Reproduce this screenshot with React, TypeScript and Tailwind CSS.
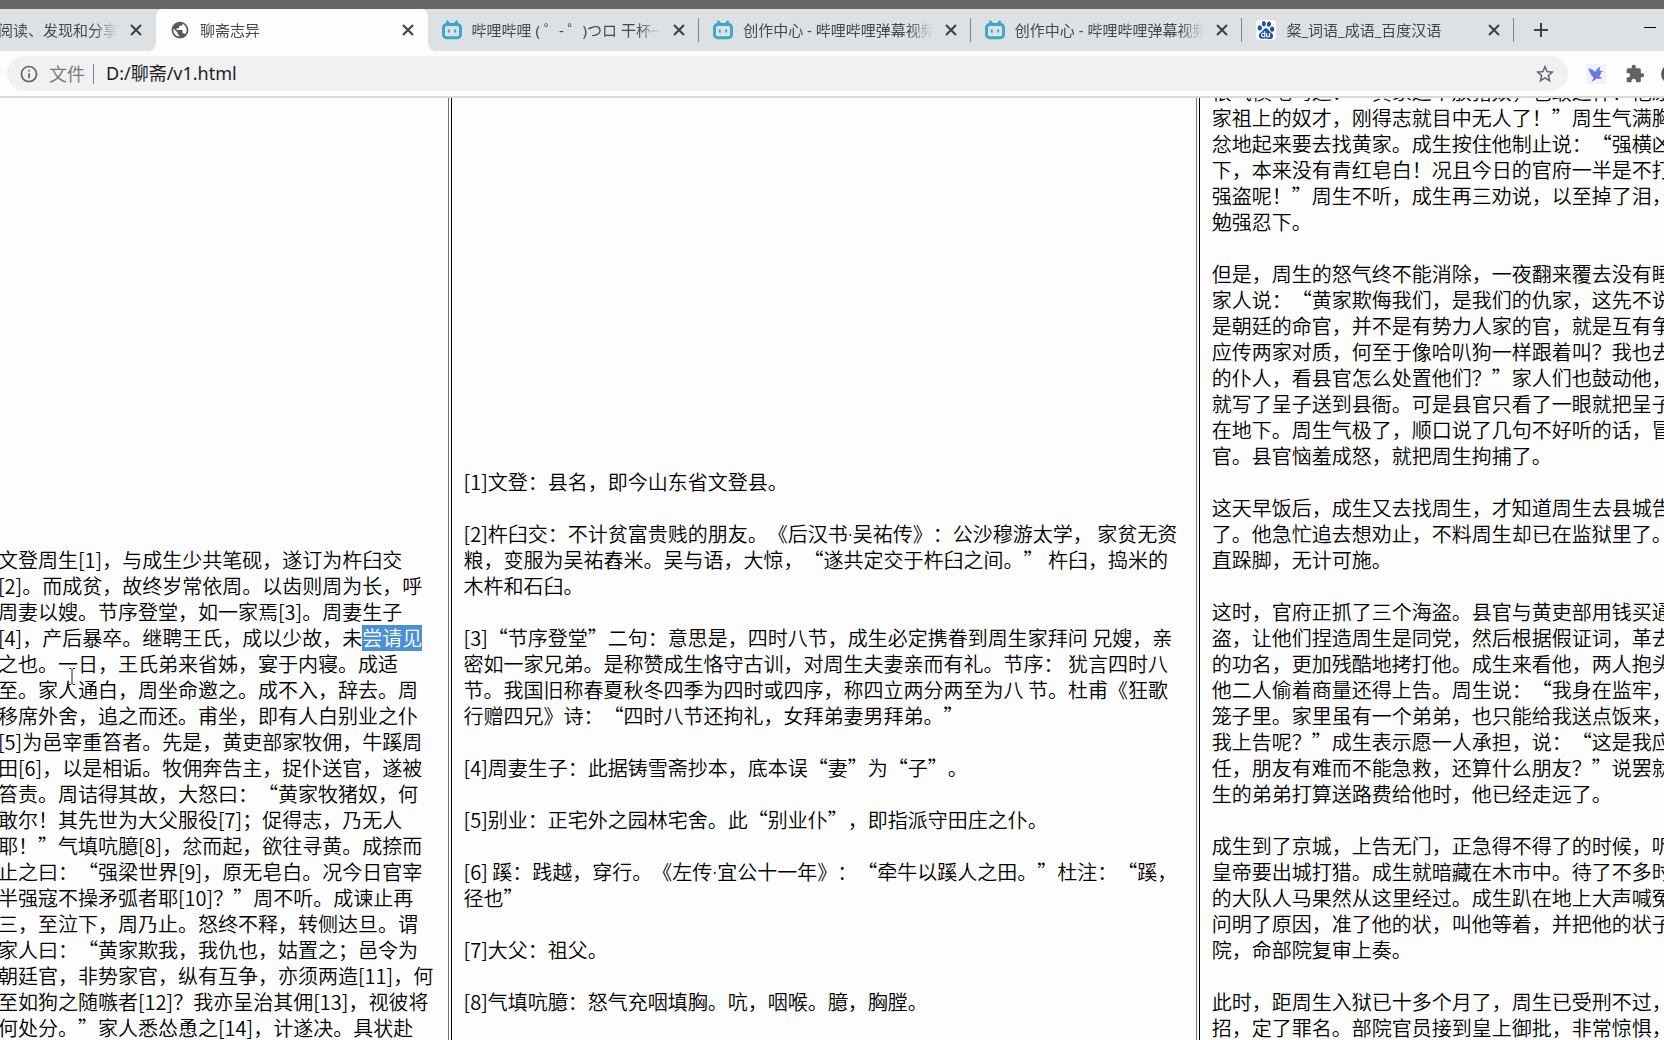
import React from "react";
import { MdExtension, MdInfoOutline, MdPublic, MdStarBorder } from "react-icons/md";
import { SiBaidu } from "react-icons/si";

type TabItem = { title: string; icon: "globe" | "bilibili" | "baidu"; active?: boolean };

const uiFont = { fontFamily: '"Noto Sans", "Noto Sans CJK SC", sans-serif' };
const pageFont = { fontFamily: '"Noto Sans CJK SC", sans-serif' };

const tabs: TabItem[] = [
  { title: "聊斋志异", icon: "globe", active: true },
  { title: "哔哩哔哩 ( ゜- ゜)つロ 干杯~-bilibili", icon: "bilibili" },
  { title: "创作中心 - 哔哩哔哩弹幕视频网", icon: "bilibili" },
  { title: "创作中心 - 哔哩哔哩弹幕视频网", icon: "bilibili" },
  { title: "粲_词语_成语_百度汉语", icon: "baidu" },
];

const original = [
  "文登周生[1]，与成生少共笔砚，遂订为杵臼交",
  "[2]。而成贫，故终岁常依周。以齿则周为长，呼",
  "周妻以嫂。节序登堂，如一家焉[3]。周妻生子",
  "[4]，产后暴卒。继聘王氏，成以少故，未|尝请见",
  "之也。一日，王氏弟来省姊，宴于内寝。成适",
  "至。家人通白，周坐命邀之。成不入，辞去。周",
  "移席外舍，追之而还。甫坐，即有人白别业之仆",
  "[5]为邑宰重笞者。先是，黄吏部家牧佣，牛蹊周",
  "田[6]，以是相诟。牧佣奔告主，捉仆送官，遂被",
  "笞责。周诘得其故，大怒曰：“黄家牧猪奴，何",
  "敢尔！其先世为大父服役[7]；促得志，乃无人",
  "耶！”气填吭臆[8]，忿而起，欲往寻黄。成捺而",
  "止之曰：“强梁世界[9]，原无皂白。况今日官宰",
  "半强寇不操矛弧者耶[10]？”周不听。成谏止再",
  "三，至泣下，周乃止。怒终不释，转侧达旦。谓",
  "家人曰：“黄家欺我，我仇也，姑置之；邑令为",
  "朝廷官，非势家官，纵有互争，亦须两造[11]，何",
  "至如狗之随嗾者[12]？我亦呈治其佣[13]，视彼将",
  "何处分。”家人悉怂恿之[14]，计遂决。具状赴",
];

const notes = [
  ["[1]文登：县名，即今山东省文登县。"],
  [
    "[2]杵臼交：不计贫富贵贱的朋友。《后汉书·吴祐传》：公沙穆游太学， 家贫无资",
    "粮，变服为吴祐舂米。吴与语，大惊，“遂共定交于杵臼之间。” 杵臼，捣米的",
    "木杵和石臼。",
  ],
  [
    "[3]“节序登堂”二句：意思是，四时八节，成生必定携眷到周生家拜问 兄嫂，亲",
    "密如一家兄弟。是称赞成生恪守古训，对周生夫妻亲而有礼。节序： 犹言四时八",
    "节。我国旧称春夏秋冬四季为四时或四序，称四立两分两至为八 节。杜甫《狂歌",
    "行赠四兄》诗：“四时八节还拘礼，女拜弟妻男拜弟。”",
  ],
  ["[4]周妻生子：此据铸雪斋抄本，底本误“妻”为“子”。"],
  ["[5]别业：正宅外之园林宅舍。此“别业仆”，即指派守田庄之仆。"],
  ["[6] 蹊：践越，穿行。《左传·宜公十一年》：“牵牛以蹊人之田。”杜注：“蹊，", "径也”"],
  ["[7]大父：祖父。"],
  ["[8]气填吭臆：怒气充咽填胸。吭，咽喉。臆，胸膛。"],
];

const translation = [
  [
    "恨气愤地骂道：“黄家这个放猪奴，也敢这样！他原",
    "家祖上的奴才，刚得志就目中无人了！”周生气满胸",
    "忿地起来要去找黄家。成生按住他制止说：“强横凶",
    "下，本来没有青红皂白！况且今日的官府一半是不打",
    "强盗呢！”周生不听，成生再三劝说，以至掉了泪，",
    "勉强忍下。",
  ],
  [
    "但是，周生的怒气终不能消除，一夜翻来覆去没有睡",
    "家人说：“黄家欺侮我们，是我们的仇家，这先不说",
    "是朝廷的命官，并不是有势力人家的官，就是互有争",
    "应传两家对质，何至于像哈叭狗一样跟着叫？我也去",
    "的仆人，看县官怎么处置他们？”家人们也鼓动他，",
    "就写了呈子送到县衙。可是县官只看了一眼就把呈子",
    "在地下。周生气极了，顺口说了几句不好听的话，冒",
    "官。县官恼羞成怒，就把周生拘捕了。",
  ],
  [
    "这天早饭后，成生又去找周生，才知道周生去县城告",
    "了。他急忙追去想劝止，不料周生却已在监狱里了。",
    "直跺脚，无计可施。",
  ],
  [
    "这时，官府正抓了三个海盗。县官与黄吏部用钱买通",
    "盗，让他们捏造周生是同党，然后根据假证词，革去",
    "的功名，更加残酷地拷打他。成生来看他，两人抱头",
    "他二人偷着商量还得上告。周生说：“我身在监牢，",
    "笼子里。家里虽有一个弟弟，也只能给我送点饭来，",
    "我上告呢？”成生表示愿一人承担，说：“这是我应",
    "任，朋友有难而不能急救，还算什么朋友？”说罢就",
    "生的弟弟打算送路费给他时，他已经走远了。",
  ],
  [
    "成生到了京城，上告无门，正急得不得了的时候，听",
    "皇帝要出城打猎。成生就暗藏在木市中。待了不多时",
    "的大队人马果然从这里经过。成生趴在地上大声喊冤",
    "问明了原因，准了他的状，叫他等着，并把他的状子",
    "院，命部院复审上奏。",
  ],
  [
    "此时，距周生入狱已十多个月了，周生已受刑不过，",
    "招，定了罪名。部院官员接到皇上御批，非常惊惧，",
  ],
];

const BilibiliIcon = () => (
  <svg viewBox="0 0 20 20" className="h-5 w-5" fill="none" stroke="#35a9c8" strokeLinecap="round">
    <path d="M5.2 1.6 7.4 4M14.8 1.600 12.600 4" strokeWidth="2.4" />
    <rect x="1.500" y="4.500" width="17" height="13.200" rx="3" strokeWidth="2.900" />
    <path d="M6.800 10.200v1.600M13.200 10.200v1.600" strokeWidth="2" />
  </svg>
);

const TabIcon = ({ icon }: { icon: TabItem["icon"] }) => {
  if (icon === "bilibili") return <BilibiliIcon />;
  if (icon === "baidu") {
    return (
      <span className="flex h-5 w-5 items-center justify-center rounded-sm bg-white">
        <SiBaidu className="h-[18px] w-[18px] text-[#1f4fa8]" />
      </span>
    );
  }
  return <MdPublic className="h-5 w-5 text-[#55595d]" />;
};

const CloseButton = () => (
  <button aria-label="关闭标签页" className="flex h-4 w-4 shrink-0 items-center justify-center">
    <svg viewBox="0 0 12 12" className="h-3 w-3" stroke="#3c4043" strokeWidth="2">
      <path d="M1 1l10 10M11 1L1 11" />
    </svg>
  </button>
);

const TabTitle = ({ children }: { children: React.ReactNode }) => (
  <span
    className="min-w-0 flex-1 overflow-hidden whitespace-pre text-[15px] leading-5 text-[#45494d] [mask-image:linear-gradient(to_right,black_calc(100%-24px),transparent)]"
    style={uiFont}
  >
    {children}
  </span>
);

// the middle dot is full width in the CJK font, so it is taken from the Latin one
const withNarrowDots = (text: string) =>
  text.split("·").map((part, index) => (
    <React.Fragment key={index}>
      {index > 0 && <span style={uiFont}>·</span>}
      {part}
    </React.Fragment>
  ));

const Lines = ({ lines }: { lines: string[] }) => (
  <p className="whitespace-pre">
    {lines.map((line, index) => {
      const [before, selected] = line.split("|");
      return (
        <span key={index} className="block h-[26px]">
          {withNarrowDots(before)}
          {selected && <mark className="inline-block h-[26px] bg-[#4a90d9] text-white">{selected}</mark>}
        </span>
      );
    })}
  </p>
);

const Divider = () => <div className="w-1 shrink-0 border-l border-r border-l-neutral-500 border-r-black" />;

const App = () => {
  return (
    <div
      className="flex h-screen flex-col overflow-hidden bg-[#fdfdfd] [text-spacing-trim:space-all]"
      style={pageFont}
      lang="zh-CN"
    >
      <div className="h-[9px] shrink-0 bg-[#656668]" />

      <header className="shrink-0">
        <div className="flex h-[42px] bg-[#dee1e4]">
          <div className="w-[156px] shrink-0 bg-[#fdfdfd]">
            <div className="flex h-full items-center gap-2.5 rounded-br-lg bg-[#dee1e4] pr-3">
              <div className="-ml-0.5 flex min-w-0 flex-1">
                <TabTitle>阅读、发现和分享</TabTitle>
              </div>
              <CloseButton />
            </div>
          </div>
          <nav className="grid w-[1358px] shrink-0 grid-cols-5">
            {tabs.map((tab, index) => (
              <div key={index} className={tab.active ? "rounded-t-lg bg-[#fdfdfd]" : index === 1 ? "bg-[#fdfdfd]" : ""}>
                <div
                  className={
                    tab.active
                      ? "flex h-full items-center pl-3.5 pr-3"
                      : "relative flex h-full items-center rounded-bl-lg bg-[#dee1e4] pl-3.5 pr-3 after:absolute after:right-0 after:h-6 after:w-px after:bg-[#808488]"
                  }
                >
                  <TabIcon icon={tab.icon} />
                  <div className="ml-2.5 mr-2.5 flex min-w-0 flex-1">
                    <TabTitle>{tab.title}</TabTitle>
                  </div>
                  <CloseButton />
                </div>
              </div>
            ))}
          </nav>
          <button aria-label="新标签页" className="ml-5 flex shrink-0 items-center">
            <svg viewBox="0 0 14 14" className="h-3.5 w-3.5" stroke="#3c4043" strokeWidth="2">
              <path d="M7 0v14M0 7h14" />
            </svg>
          </button>
          <button aria-label="最小化" className="ml-auto mr-2 flex h-9 w-3 shrink-0 items-center">
            <span className="block h-px w-3 bg-black" />
          </button>
        </div>

        <div className="flex h-[45px] items-center pl-[7px]">
          <div className="flex h-[35px] min-w-0 flex-1 items-center rounded-full bg-[#eff1f3] px-3">
            <MdInfoOutline className="h-5 w-5 text-[#5f6368]" />
            <label htmlFor="url" className="ml-2.5 pb-0.5 text-lg leading-6 text-[#777b7f]">
              文件
            </label>
            <span className="ml-2 h-5 w-px bg-[#7c8084]" />
            <input
              id="url"
              defaultValue="D:/聊斋/v1.html"
              className="ml-3 min-w-0 flex-1 bg-transparent pb-0.5 text-lg leading-6 text-[#1c1e20] outline-none"
              style={uiFont}
            />
            <button aria-label="为此标签页添加书签">
              <MdStarBorder className="h-[22px] w-[22px] text-[#5f6368]" />
            </button>
          </div>
          <div className="flex w-24 shrink-0 items-center overflow-hidden pl-[18px]">
            <button aria-label="翻译插件" className="flex h-5 w-5 shrink-0 items-center justify-center bg-[#f0f2fc]">
              <svg viewBox="0 0 18 18" className="h-4.5 w-4.5">
                <defs>
                  <linearGradient id="bird" x1="0" y1="0" x2="0" y2="1">
                    <stop offset="0" stopColor="#5b8def" />
                    <stop offset="1" stopColor="#7a62dc" />
                  </linearGradient>
                </defs>
                <path
                  d="M1.5 3.5c2.600 0 4.900 1.200 6.700 3.600C9 4.800 10.800 2.800 13.600 1.500c-.9 1.800-1 3.300-.7 4.500 1.200-.5 2.500-.4 3.600.3l-2.300 1c-.3 1.900-1 3.300-2.200 4.200l3.500 1.500c-2 1-4 1-5.900.2-1.300 1.700-3 2.800-5.300 3.300 1.300-1.300 2.100-2.600 2.200-4.100C4.300 10.800 2.300 7.500 1.500 3.500z"
                  fill="url(#bird)"
                />
              </svg>
            </button>
            <button aria-label="扩展程序" className="ml-[19px] shrink-0">
              <MdExtension className="h-5 w-5 text-[#5f6368]" />
            </button>
            <button aria-label="账户" className="ml-4 h-5 w-5 shrink-0 rounded-full bg-[#55595d]" />
          </div>
        </div>
        <div className="h-0.5 bg-[#d8d9db]" />
      </header>

      <main className="flex min-h-0 flex-1 overflow-hidden text-xl leading-[26px] font-[350] text-black">
        <section className="relative w-[26.9%] shrink-0 overflow-hidden">
          <div className="-ml-0.5 pt-[449px]">
            <Lines lines={original} />
          </div>
          <svg viewBox="0 0 8 17" className="absolute left-[68px] top-[570px] h-[17px] w-2" fill="none" stroke="#222">
            <path d="M1 .5h2l1 1 1-1h2M4 1.500v14M1 16.500h2l1-1 1 1h2" />
          </svg>
        </section>
        <Divider />
        <section className="min-w-0 flex-1 overflow-hidden pl-3 pt-[371px]">
          <div className="flex flex-col gap-[26px]">
            {notes.map((note, index) => (
              <Lines key={index} lines={note} />
            ))}
          </div>
        </section>
        <Divider />
        <section className="w-[27.9%] shrink-0 overflow-hidden pl-3">
          <div className="-mt-[19px] flex flex-col gap-[26px]">
            {translation.map((paragraph, index) => (
              <Lines key={index} lines={paragraph} />
            ))}
          </div>
        </section>
      </main>
    </div>
  );
};

export default App;
